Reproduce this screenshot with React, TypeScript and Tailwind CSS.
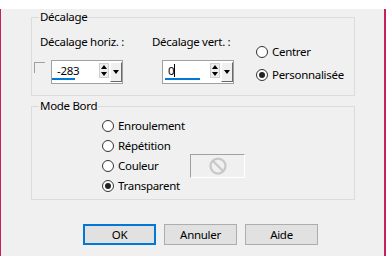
import React from 'react';

function Radio({ label, checked, labelWidth }: { label: string; checked?: boolean; labelWidth?: string }) {
  return (
    <div className="flex items-center h-[20px]">
      <div className="w-[12px] h-[12px] rounded-full border border-[#333333] bg-white flex items-center justify-center">
        {checked && <div className="w-[6px] h-[6px] rounded-full bg-[#222222]" />}
      </div>
      <span className={`ml-[4px] ${labelWidth ?? ''}`}>{label}</span>
    </div>
  );
}

function SpinEdit({ value, underline, caret }: { value: string; underline: string; caret?: boolean }) {
  return (
    <div className="relative flex h-[24px] w-[72px] border border-[#a0a0a0] bg-white">
      <div className="w-[46px] flex items-center pl-[5px] pb-[3px]">
        <span>{value}</span>
        {caret && <span className="inline-block w-px h-[13px] bg-black" />}
      </div>
      <div className={`absolute bottom-[3px] h-[2px] bg-[#0078d7] ${underline}`} />
      <div className="ml-[1px] mt-[2px] w-[10px] h-[15px] border border-[#cfcfcf] bg-[#ededed] flex flex-col items-center justify-around">
        <svg width="6" height="4" viewBox="0 0 6 4"><path d="M3 0 L6 4 L0 4 Z" fill="#000" /></svg>
        <svg width="6" height="4" viewBox="0 0 6 4"><path d="M0 0 L6 0 L3 4 Z" fill="#000" /></svg>
      </div>
      <div className="ml-[1px] mt-[1px] w-[12px] h-[20px] bg-[#f0f0f0] border-t border-l border-t-white border-l-white border-r border-b border-r-[#696969] border-b-[#696969] flex items-center justify-center">
        <svg width="6" height="4" viewBox="0 0 6 4"><path d="M0 0 L6 0 L3 4 Z" fill="#000" /></svg>
      </div>
    </div>
  );
}

function Button({ label, focused }: { label: string; focused?: boolean }) {
  return (
    <div
      className={`w-[73px] h-[21px] bg-[#e1e1e1] flex items-center justify-center ${
        focused ? 'border-2 border-[#0078d7]' : 'border border-[#adadad]'
      }`}
    >
      {label}
    </div>
  );
}

export default function App() {
  return (
    <div
      className="w-[386px] h-[256px] bg-[#f0f0f0] border-l border-r-2 border-b border-[#c4215f] text-[11.5px] tracking-[-0.3px] leading-[16px] text-black"
      style={{ fontFamily: '"Noto Sans", "DejaVu Sans", sans-serif' }}
    >
      <fieldset className="ml-[30px] mt-[9px] w-[324px] border border-[#dcdcdc] pb-[10px]">
        <legend className="ml-[7px] px-[1px]">Décalage</legend>
        <div className="flex">
          <div className="flex flex-col">
            <div className="flex mt-[9px]">
              <span className="w-[120px] pl-[8px] whitespace-nowrap">Décalage horiz. :</span>
              <span className="whitespace-nowrap">Décalage vert. :</span>
            </div>
            <div className="flex items-start mt-[10px]">
              <div className="ml-[2px] mt-[2px] w-[11px] h-[11px] border-t border-l border-[#a0a0a0]" />
              <div className="ml-[6px]">
                <SpinEdit value="-283" underline="left-0 w-[23px]" />
              </div>
              <div className="ml-[39px]">
                <SpinEdit value="0" underline="left-[2px] w-[35px]" caret />
              </div>
            </div>
          </div>
          <div className="ml-[22px] mt-[17px] flex flex-col">
            <Radio label="Centrer" />
            <div className="mt-[3px]">
              <Radio label="Personnalisée" checked />
            </div>
          </div>
        </div>
      </fieldset>

      <fieldset className="ml-[30px] mt-[2px] w-[324px] border border-[#dcdcdc] pt-[2px] pb-[3px]">
        <legend className="ml-[7px] px-[1px]">Mode Bord</legend>
        <div className="ml-[70px] flex flex-col">
          <Radio label="Enroulement" />
          <Radio label="Répétition" />
          <div className="flex items-center h-[20px]">
            <Radio label="Couleur" labelWidth="w-[72px]" />
            <div className="w-[55px] h-[24px] border-t border-l border-[#a0a0a0] border-r-white border-b-white border-r border-b flex items-center justify-center">
              <svg width="18" height="18" viewBox="0 0 24 24" fill="none" stroke="#c8c8c8" strokeWidth="3">
                <circle cx="12" cy="12" r="10" />
                <path d="M4.9 4.9 L19.1 19.1" />
              </svg>
            </div>
          </div>
          <Radio label="Transparent" checked />
        </div>
      </fieldset>

      <div className="flex gap-[8px] ml-[82px] mt-[24px]">
        <Button label="OK" focused />
        <Button label="Annuler" />
        <Button label="Aide" />
      </div>
    </div>
  );
}
